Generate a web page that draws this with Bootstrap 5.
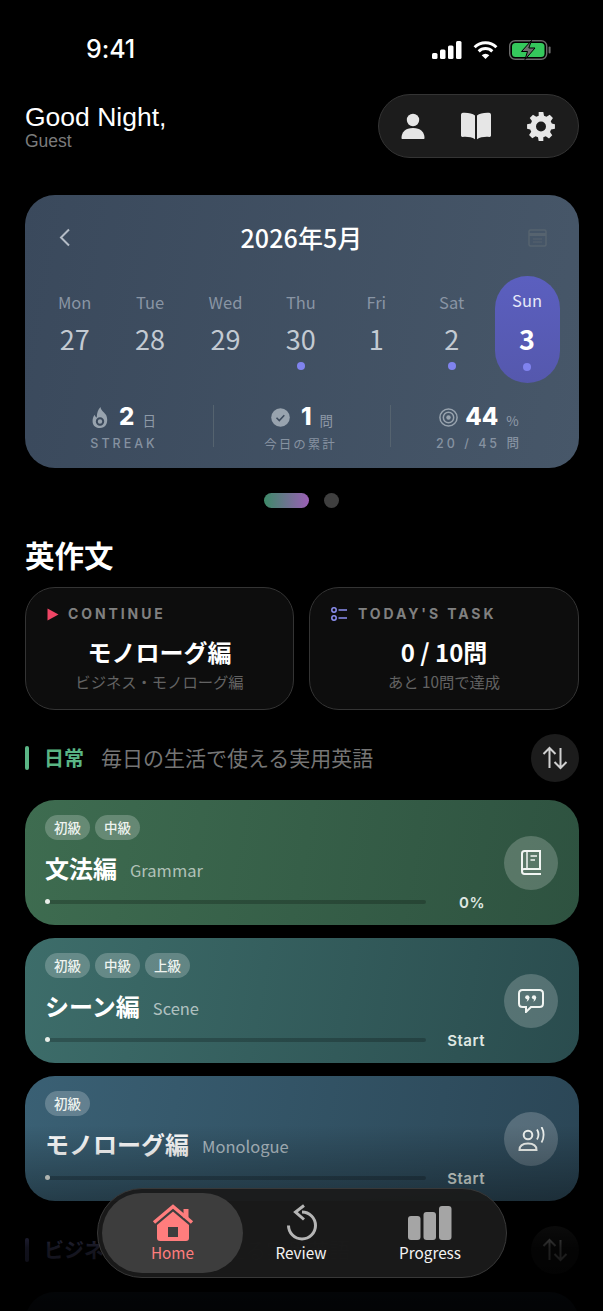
<!DOCTYPE html>
<html lang="ja">
  <head>
    <meta charset="UTF-8" />
    <meta name="viewport" content="width=device-width, initial-scale=1.0" />
    <title>英作文</title>
    <link rel="stylesheet" type="text/css" href="https://cdn.jsdelivr.net/npm/bootstrap@5.3.3/dist/css/bootstrap.min.css" />
    <script src="https://cdn.jsdelivr.net/npm/bootstrap@5.3.3/dist/js/bootstrap.bundle.min.js"></script>
    <style>
      html, body { height: 100%; background: #000; }
      body { overflow: hidden; font-family: "Noto Sans CJK JP", "Noto Sans", sans-serif; color: #fff; }
      .phone { position: relative; width: 603px; height: 1311px; overflow: hidden; background: #000; }
      .page { padding: 0 24px 0 25px; }

      .status-row { height: 94px; margin: 0 -24px 0 -25px; position: relative; }
      .clock { position: absolute; left: 86px; top: 33px; font: 500 25px/32px "Inter", "Liberation Sans", sans-serif; letter-spacing: -.1px; }
      .status-icons { position: absolute; left: 432px; top: 40px; gap: 11px; }

      .head-row { height: 64px; margin-bottom: 37px; }
      .hello { font: 400 26.5px/30px "Liberation Sans", sans-serif; margin-top: 8px; }
      .guest { font: 400 17.5px/19px "Liberation Sans", sans-serif; color: #7b7b7b; }
      .top-pill { width: 201px; height: 64px; border-radius: 32px; background: #1c1c1c; border: 1px solid #343434; padding: 0 23px 0 22px; }

      .cal-card { height: 273px; border-radius: 30px; background: linear-gradient(100deg, #3a495c 0%, #475769 100%); padding: 0 12px; }
      .cal-head { padding: 27px 19px 0 16px; height: 81px; }
      .cal-title { font-size: 25px; line-height: 30px; font-weight: 500; letter-spacing: .1px; }
      .day-col { width: 75.4px; height: 107px; }
      .day-inner { width: 65px; height: 107px; border-radius: 33px; }
      .day-inner.is-today { background: linear-gradient(180deg, #5b5fbf, #5558ad); }
      .day-name { font-size: 16.5px; line-height: 24px; padding-top: 14px; height: 38px; box-sizing: border-box; color: #8995a4; }
      .is-today .day-name { color: #e6e8f8; padding-top: 12px; }
      .day-num { font-size: 27px; line-height: 34px; margin-top: 8px; color: #c3cad2; }
      .is-today .day-num { color: #fff; font-weight: 700; }
      .day-dot { width: 8px; height: 8px; border-radius: 50%; margin-top: 6px; background: #8083ee; }
      .is-today .day-dot { margin-top: 7px; }
      .day-dot.off { background: transparent; }
      .stats-row { margin-top: 22px; }
      .stat-col { width: 177px; height: 46px; }
      .stat-col:first-child { width: 176px; }
      .stat-col:first-child .stat-label { margin-right: 2px; }
      .stat-col:first-child .stat-top { margin-right: 2px; }
      .stat-col + .stat-col { border-left: 1px solid #55636f; height: 42px; }
      .stat-top { height: 24px; gap: 7px; }
      .stat-num { font: 800 24px/24px "Inter", sans-serif; }
      .stat-unit { font-size: 13.5px; color: #8f9aa8; margin-left: 3px; padding-top: 5px; line-height: 20px; }
      .stat-label { font-size: 12.5px; line-height: 16px; margin-top: 7px; color: #8692a1; }
      .stat-label.wide { font-family: "Inter", "Noto Sans CJK JP", sans-serif; letter-spacing: 3px; font-size: 12.5px; font-weight: 500; }
      .stat-label.mid { letter-spacing: 2px; margin-right: 3px; }

      .pager { margin: 25px 0 0 -1px; gap: 15px; }
      .pager-on { width: 45px; height: 15px; border-radius: 8px; background: linear-gradient(90deg, #3d8a68, #9b5fb5); }
      .pager-off { width: 15px; height: 15px; border-radius: 50%; background: #3f3f3f; }

      .big-head { font-size: 29.5px; line-height: 40px; font-weight: 700; margin: 26px 0 13px; }
      .mini-row { gap: 15px; }
      .mini-card { width: 269px; height: 123px; border-radius: 30px; background: #0d0d0d; border: 1px solid #343434; padding: 14px 21px 0; text-align: center; }
      .mini-card:last-child { width: 270px; }
      .mini-label { font: 700 14px/24px "Inter", "Liberation Sans", sans-serif; letter-spacing: 2.9px; color: #808080; gap: 9px; }
      .mini-card:last-child .mini-label { gap: 11px; }
      .mini-big { font-size: 24px; line-height: 36px; font-weight: 700; margin-top: 8px; }
      .mini-sub { font-size: 15.300px; line-height: 20px; color: #636363; margin-top: 1px; }

      .sect-row { height: 48px; margin: 24px 0 18px; }
      .sect-row.dim { margin-top: 25px; }
      .sect-bar { width: 4px; height: 24px; border-radius: 2px; background: #5ab585; margin-right: 16px; }
      .sect-bar.biz { background: #6f70b8; }
      .sect-name { font-size: 20px; font-weight: 700; color: #5ab585; margin-right: 17px; margin-left: -1px; }
      .sect-name.biz { color: #8f90d8; }
      .sect-desc { font-size: 21px; color: #757575; }
      .swap-btn { width: 48px; height: 48px; border-radius: 50%; background: #1c1c1c; }

      .lesson { height: 125px; border-radius: 30px; margin-bottom: 13px; padding: 15px 21px 0 20px; gap: 19px; }
      .lesson.grammar { background: linear-gradient(100deg, #3e6c50 0%, #2e5240 100%); }
      .lesson.scene { background: linear-gradient(100deg, #3d6d6a 0%, #2a4c4e 100%); }
      .lesson.mono { background: linear-gradient(100deg, #3a6074 0%, #2b4656 100%); }
      .lesson.dark { background: #23344a; }
      .chip { height: 25px; width: 45px; border-radius: 13px; background: rgba(255,255,255,.22); font-size: 13.5px; line-height: 25px; text-align: center; color: #eef3ef; font-weight: 500; }
      .chip-row { gap: 5px; }
      .lesson-title { height: 36px; margin-top: 10px; gap: 13px; }
      .lesson-name { font-size: 24px; line-height: 36px; font-weight: 700; }
      .lesson-en { font-size: 16.5px; line-height: 36px; color: rgba(255,255,255,.62); padding-top: 2px; }
      .track-row { height: 20px; margin-top: 6px; }
      .track { height: 4px; border-radius: 2px; background: rgba(0,0,0,.22); }
      .track-dot { width: 5px; height: 5px; border-radius: 50%; background: #e8efe9; margin-top: -.5px; }
      .track-txt { width: 59px; text-align: right; font: 600 15px/20px "Inter", sans-serif; letter-spacing: .5px; color: #dfe7e2; padding-top: 1px; }
      .lesson-ic { width: 54px; height: 54px; border-radius: 50%; background: rgba(255,255,255,.2); margin-top: -15px; }

      .fade-veil { position: absolute; left: 0; right: 0; top: 1125px; bottom: 0; pointer-events: none; background: linear-gradient(180deg, rgba(0,0,0,0) 0%, rgba(0,0,0,.35) 40%, rgba(0,0,0,.85) 66%, rgba(0,0,0,.93) 100%); }
      .tabbar { position: absolute; left: 97px; top: 1188px; width: 410px; height: 90px; border-radius: 45px; background: rgba(27,27,27,.94); border: 1px solid #383838; padding: 4px; }
      .tab-item { height: 80px; padding-top: 11px; font-size: 15.300px; line-height: 20px; color: #f2f2f2; font-weight: 400; }
      .tab-item svg { display: block; margin-bottom: 1px; }
      .tab-home { width: 141px; border-radius: 40px; background: #3d3d3d; color: #ff7d7d; }
      .tab-review { width: 116px; }
      .tab-progress { width: 142px; }
    </style>
  </head>
  <body>
    <div class="phone">
      <div class="page">
        <div class="status-row">
          <div class="clock">9:41</div>
          <div class="status-icons d-flex align-items-center">
            <svg width="30" height="18" viewBox="0 0 30 18" fill="#fff"><rect x="0" y="12" width="5.5" height="6" rx="1.5"/><rect x="8" y="8.500" width="5.5" height="9.500" rx="1.5"/><rect x="16" y="4.500" width="5.5" height="13.500" rx="1.5"/><rect x="24" y="0" width="5.5" height="18" rx="1.5"/></svg>
            <svg width="25" height="18" viewBox="0 0 25 18" fill="none" stroke="#fff" stroke-width="3"><path d="M1.600 6.300a15.600 15.600 0 0 1 21.800 0"/><path d="M5.700 10.300a9.800 9.800 0 0 1 13.600 0"/><path d="M12.500 18l-3.800-3.800a5.400 5.400 0 0 1 7.600 0z" fill="#fff" stroke="none"/></svg>
            <svg width="42" height="20" viewBox="0 0 42 20"><rect x=".7" y=".7" width="37" height="18.600" rx="5.500" fill="none" stroke="#6b6b6b" stroke-width="1.4"/><rect x="3" y="3" width="32.500" height="14" rx="3.500" fill="#35c85c"/><rect x="39.600" y="6.500" width="2" height="7" rx="1" fill="#6b6b6b"/><path d="M22.500 .5L12.500 11.500h6l-2.500 8 10-11.500h-6.200z" fill="#6f6f6f" stroke="#000" stroke-width="1"/></svg>
          </div>
        </div>

        <div class="head-row d-flex justify-content-between">
          <div>
            <div class="hello">Good Night,</div>
            <div class="guest">Guest</div>
          </div>
          <div class="top-pill d-flex align-items-center justify-content-between">
            <svg width="24" height="26" viewBox="0 0 24 26" fill="#e6e6e6"><circle cx="12" cy="7" r="6.2"/><path d="M.5 25c0-6 4-10 11.500-10s11.500 4 11.500 10c0 .6-.4 1-1 1H1.500c-.6 0-1-.4-1-1z"/></svg>
            <svg width="32" height="28" viewBox="0 0 32 28" fill="#e6e6e6"><path d="M15 3.500C12.500 1.500 8 .5 3 .8 1.500 1 1 1.800 1 3v20.500c0 1 .7 1.500 1.800 1.400 4.500-.4 9 .3 12.200 2.300z"/><path d="M17 3.500C19.500 1.500 24 .5 29 .8c1.500.2 2 1 2 2.200v20.500c0 1-.7 1.500-1.800 1.400-4.500-.4-9 .3-12.200 2.300z"/></svg>
            <svg width="28" height="29" viewBox="0 0 24 25" fill="#e6e6e6"><path fill-rule="evenodd" d="M10 0h4l.6 3.300 2.100.9L19.500 2.300l2.800 2.800-1.900 2.800.9 2.100L24 10.600v3.900l-3.300.6-.9 2.100 1.900 2.800-2.800 2.800-2.800-1.900-2.100.9L14 25h-4l-.6-3.300-2.100-.9-2.800 1.900-2.800-2.800 1.900-2.800-.9-2.100L0 14.400v-3.900l3.300-.6.900-2.100L2.300 5.100l2.800-2.800 2.800 1.900 2.100-.9zM12 8.200a4.300 4.300 0 1 0 0 8.600 4.300 4.300 0 0 0 0-8.600z"/></svg>
          </div>
        </div>

        <div class="cal-card">
          <div class="cal-head d-flex justify-content-between">
            <svg width="22" height="32" viewBox="0 0 22 32" fill="none" stroke="#b4bcc6" stroke-width="2"><path d="M16 7.500l-8 8 8 8"/></svg>
            <div class="cal-title">2026年5月</div>
            <svg width="20" height="32" viewBox="0 0 20 32" fill="none" stroke="#56636f" stroke-width="1.500"><rect x="1" y="8" width="17" height="16" rx="1.500"/><path d="M1 12.500h17" stroke-width="3"/><path d="M5 17h9M5 20h9" stroke-width="1"/></svg>
          </div>
          <div class="d-flex" id="dayRow"></div>
          <div class="stats-row d-flex align-items-start">
            <div class="stat-col text-center">
              <div class="stat-top d-flex justify-content-center align-items-center">
                <svg width="16" height="21" viewBox="0 0 16 21"><path d="M8.500 0c.5 3.500 3 4.500 5.200 7.500 2.700 3.800 2.300 13.500-5.700 13.500S-1 13 2.500 7.800c.5 1.500 1.300 2.400 2.300 2.800C4.700 6.500 6 2.500 8.500 0z" fill="#98a3ae"/><circle cx="8" cy="14.500" r="3.200" fill="none" stroke="#3c4a5c" stroke-width="2"/></svg>
                <span class="d-flex"><span class="stat-num ms-1">2</span><span class="stat-unit ms-2">日</span></span>
              </div>
              <div class="stat-label wide">STREAK</div>
            </div>
            <div class="stat-col text-center">
              <div class="stat-top d-flex justify-content-center align-items-center">
                <svg width="19" height="19" viewBox="0 0 19 19"><circle cx="9.500" cy="9.500" r="9.300" fill="#98a3ae"/><path d="M5.500 9.800l2.800 2.800 5-5.400" fill="none" stroke="#3e4c5e" stroke-width="1.600"/></svg>
                <span class="d-flex"><span class="stat-num ms-1">1</span><span class="stat-unit ms-2">問</span></span>
              </div>
              <div class="stat-label mid">今日の累計</div>
            </div>
            <div class="stat-col text-center">
              <div class="stat-top d-flex justify-content-center align-items-center">
                <svg width="19" height="19" viewBox="0 0 19 19" fill="none" stroke="#98a3ae"><circle cx="9.500" cy="9.500" r="8.600" stroke-width="1.500"/><circle cx="9.500" cy="9.500" r="5.200" stroke-width="1.500"/><circle cx="9.500" cy="9.500" r="2.200" fill="#98a3ae" stroke="none"/></svg>
                <span class="d-flex"><span class="stat-num">44</span><span class="stat-unit ms-2">%</span></span>
              </div>
              <div class="stat-label wide">20 / 45 問</div>
            </div>
          </div>
        </div>

        <div class="pager d-flex justify-content-center">
          <div class="pager-on"></div>
          <div class="pager-off"></div>
        </div>

        <div class="big-head">英作文</div>

        <div class="mini-row d-flex">
          <div class="mini-card">
            <div class="mini-label d-flex align-items-center">
              <svg width="12" height="13" viewBox="0 0 12 13"><path d="M.5.500l11 6-11 6z" fill="#ef4565"/></svg>
              <span>CONTINUE</span>
            </div>
            <div class="mini-big">モノローグ編</div>
            <div class="mini-sub">ビジネス・モノローグ編</div>
          </div>
          <div class="mini-card">
            <div class="mini-label d-flex align-items-center">
              <svg width="16" height="14" viewBox="0 0 16 14" fill="none" stroke="#8c8ff0" stroke-width="1.500"><circle cx="3" cy="3" r="2.200"/><circle cx="3" cy="11" r="2.200"/><path d="M7.500 3h8.500M7.500 11h8.500"/></svg>
              <span>TODAY'S TASK</span>
            </div>
            <div class="mini-big">0 / 10問</div>
            <div class="mini-sub">あと 10問で達成</div>
          </div>
        </div>

        <div class="sect-row d-flex align-items-center">
          <div class="sect-bar"></div>
          <div class="sect-name">日常</div>
          <div class="sect-desc flex-grow-1">毎日の生活で使える実用英語</div>
          <div class="swap-btn d-flex align-items-center justify-content-center">
            <svg width="26" height="24" viewBox="0 0 26 24" fill="none" stroke="#d0d0d0" stroke-width="2"><path d="M7.500 22V2M1.500 8l6-6 6 6"/><path d="M18.500 2v20M12.500 16l6 6 6-6"/></svg>
          </div>
        </div>

        <div class="lesson grammar d-flex">
          <div class="flex-grow-1">
            <div class="chip-row d-flex"><span class="chip">初級</span><span class="chip">中級</span></div>
            <div class="lesson-title d-flex"><span class="lesson-name">文法編</span><span class="lesson-en">Grammar</span></div>
            <div class="track-row d-flex align-items-center"><div class="track flex-grow-1 d-flex align-items-center"><span class="track-dot"></span></div><div class="track-txt">0%</div></div>
          </div>
          <div class="lesson-ic d-flex align-items-center justify-content-center flex-shrink-0 align-self-center">
            <svg width="22" height="26" viewBox="0 0 22 26" fill="none" stroke="#f1f5f2" stroke-width="2"><path d="M2 21V3.500C2 2 3 1 4.500 1H20v18H4c-1.300 0-2 .8-2 2.200C2 23 3 24 4.500 24H21"/><path d="M7 1v18" stroke-width="1.500"/><path d="M10.500 6H17M10.500 10H15" stroke-width="1.500"/></svg>
          </div>
        </div>

        <div class="lesson scene d-flex">
          <div class="flex-grow-1">
            <div class="chip-row d-flex"><span class="chip">初級</span><span class="chip">中級</span><span class="chip">上級</span></div>
            <div class="lesson-title d-flex"><span class="lesson-name">シーン編</span><span class="lesson-en">Scene</span></div>
            <div class="track-row d-flex align-items-center"><div class="track flex-grow-1 d-flex align-items-center"><span class="track-dot"></span></div><div class="track-txt">Start</div></div>
          </div>
          <div class="lesson-ic d-flex align-items-center justify-content-center flex-shrink-0 align-self-center">
            <svg width="26" height="24" viewBox="0 0 26 24" fill="none"><path d="M4.500 1h17C23.500 1 25 2.500 25 4.500v10c0 2-1.500 3.500-3.500 3.500H13l-5 5v-5H4.500C2.500 18 1 16.500 1 14.500v-10C1 2.500 2.500 1 4.500 1z" stroke="#f1f5f2" stroke-width="2"/><circle cx="9.300" cy="8.300" r="2.100" fill="#f1f5f2"/><path d="M11.400 8.300c0 2.300-1 3.700-2.900 4.500.6-.9.900-1.800.9-2.900z" fill="#f1f5f2"/><circle cx="16" cy="8.300" r="2.100" fill="#f1f5f2"/><path d="M18.100 8.300c0 2.300-1 3.700-2.900 4.500.6-.9.900-1.800.9-2.900z" fill="#f1f5f2"/></svg>
          </div>
        </div>

        <div class="lesson mono d-flex">
          <div class="flex-grow-1">
            <div class="chip-row d-flex"><span class="chip">初級</span></div>
            <div class="lesson-title d-flex"><span class="lesson-name">モノローグ編</span><span class="lesson-en">Monologue</span></div>
            <div class="track-row d-flex align-items-center"><div class="track flex-grow-1 d-flex align-items-center"><span class="track-dot"></span></div><div class="track-txt">Start</div></div>
          </div>
          <div class="lesson-ic d-flex align-items-center justify-content-center flex-shrink-0 align-self-center">
            <svg width="27" height="24" viewBox="0 0 27 24" fill="none" stroke="#f1f5f2" stroke-width="2"><circle cx="10" cy="8" r="4.300"/><path d="M1.500 23c0-4.500 3.500-6.500 8.500-6.500s8.500 2 8.500 6.500z"/><path d="M19 2.500c1.800 3 1.800 7 0 10M23.500 0c2.800 4.500 2.800 11 0 15.500" stroke-width="1.800"/></svg>
          </div>
        </div>

        <div class="sect-row dim d-flex align-items-center">
          <div class="sect-bar biz"></div>
          <div class="sect-name biz">ビジネス</div>
          <div class="sect-desc flex-grow-1">仕事で使える実用英語</div>
          <div class="swap-btn d-flex align-items-center justify-content-center">
            <svg width="26" height="24" viewBox="0 0 26 24" fill="none" stroke="#d0d0d0" stroke-width="2"><path d="M7.500 22V2M1.500 8l6-6 6 6"/><path d="M18.500 2v20M12.500 16l6 6 6-6"/></svg>
          </div>
        </div>
        <div class="lesson dark"></div>
      </div>

      <div class="fade-veil"></div>

      <div class="tabbar d-flex">
        <div class="tab-item tab-home d-flex flex-column align-items-center">
          <svg width="42" height="37" viewBox="0 0 42 37"><path d="M2 18.500L21 2.500l19 16" fill="none" stroke="#ff7d7d" stroke-width="3.500"/><rect x="31.500" y="5" width="5" height="9" fill="#ff7d7d"/><path d="M5 21L21 7.500 37 21v13a3 3 0 0 1-3 3H8a3 3 0 0 1-3-3z" fill="#ff7d7d"/><rect x="16" y="23" width="10" height="10" fill="#3d3d3d"/></svg>
          <span>Home</span>
        </div>
        <div class="tab-item tab-review d-flex flex-column align-items-center">
          <svg width="33" height="37" viewBox="0 0 33 37" fill="none" stroke="#b5b5b5" stroke-width="3"><path d="M17 8a13.500 13.500 0 1 1-13.500 13.500"/><path d="M19 1.500L10.500 8l8.500 7.500"/></svg>
          <span>Review</span>
        </div>
        <div class="tab-item tab-progress d-flex flex-column align-items-center">
          <svg width="44" height="37" viewBox="0 0 44 37" fill="#a5a5a5"><rect x="0" y="12" width="12.500" height="24" rx="3"/><rect x="15.500" y="8" width="12.500" height="28" rx="3"/><rect x="31" y="2" width="12.500" height="34" rx="3"/></svg>
          <span>Progress</span>
        </div>
      </div>
    </div>

    <script>
      const dayRow = document.querySelector("#dayRow");
      const days = [
        { name: "Mon", num: 27, dot: false },
        { name: "Tue", num: 28, dot: false },
        { name: "Wed", num: 29, dot: false },
        { name: "Thu", num: 30, dot: true },
        { name: "Fri", num: 1, dot: false },
        { name: "Sat", num: 2, dot: true },
        { name: "Sun", num: 3, dot: true, today: true },
      ];
      for (let i = 0; i < days.length; i++) {
        const col = document.createElement("div");
        col.className = "day-col d-flex justify-content-center";
        col.innerHTML = `
          <div class="day-inner d-flex flex-column align-items-center ${days[i].today ? "is-today" : ""}">
            <div class="day-name">${days[i].name}</div>
            <div class="day-num">${days[i].num}</div>
            <div class="day-dot ${days[i].dot ? "" : "off"}"></div>
          </div>`;
        dayRow.appendChild(col);
      }
    </script>
  </body>
</html>
